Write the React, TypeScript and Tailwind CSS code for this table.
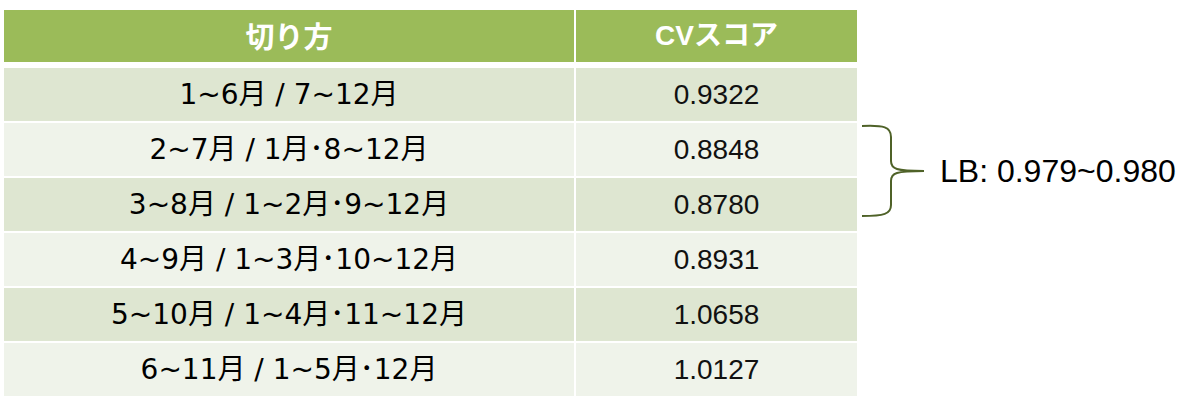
import React from "react";

const rows: [string, string][] = [
  ["1~6月 / 7~12月", "0.9322"],
  ["2~7月 / 1月･8~12月", "0.8848"],
  ["3~8月 / 1~2月･9~12月", "0.8780"],
  ["4~9月 / 1~3月･10~12月", "0.8931"],
  ["5~10月 / 1~4月･11~12月", "1.0658"],
  ["6~11月 / 1~5月･12月", "1.0127"],
];

export default function App() {
  return (
    <div className="w-[1186px] h-[404px] bg-white flex items-start overflow-hidden">
      <div className="ml-[4px] mt-[10px] grid grid-cols-[570px_281px] gap-x-[2px] gap-y-[2px]">
        <div className="h-[52px] mb-[4px] bg-[#9bbb59] flex items-center justify-center text-white text-[29px] font-bold [font-family:'Noto_Sans_CJK_JP',sans-serif]">
          切り方
        </div>
        <div className="h-[52px] mb-[4px] bg-[#9bbb59] flex items-center justify-center text-white text-[28px] font-bold [font-family:'Liberation_Sans','Noto_Sans_CJK_JP',sans-serif]">
          CVスコア
        </div>
        {rows.map(([a, b], i) => {
          const bg = i % 2 === 0 ? "bg-[#dee6d1]" : "bg-[#eff3ea]";
          return (
            <React.Fragment key={i}>
              <div
                className={`h-[53px] ${bg} flex items-center justify-center text-[28px] text-black [font-family:'DejaVu_Sans','Noto_Sans_CJK_JP',sans-serif]`}
              >
                {a}
              </div>
              <div
                className={`h-[53px] ${bg} flex items-center justify-center text-[28px] text-[#111] [font-family:'Liberation_Sans',sans-serif]`}
              >
                {b}
              </div>
            </React.Fragment>
          );
        })}
      </div>
      <div className="ml-[3px] mt-[123px] flex items-center">
        <svg width="66" height="96" viewBox="0 0 66 96" className="shrink-0">
          <path
            d="M2 3 C24 2 31 4 31 14 L31 38 C31 46 36 48 64 48 C36 48 31 50 31 58 L31 82 C31 91 24 93 2 93"
            fill="none"
            stroke="#4f6228"
            strokeWidth="2"
          />
        </svg>
        <div className="ml-[14px] text-[32px] text-black whitespace-nowrap [font-family:'Liberation_Sans',sans-serif]">
          LB: 0.979~0.980
        </div>
      </div>
    </div>
  );
}
